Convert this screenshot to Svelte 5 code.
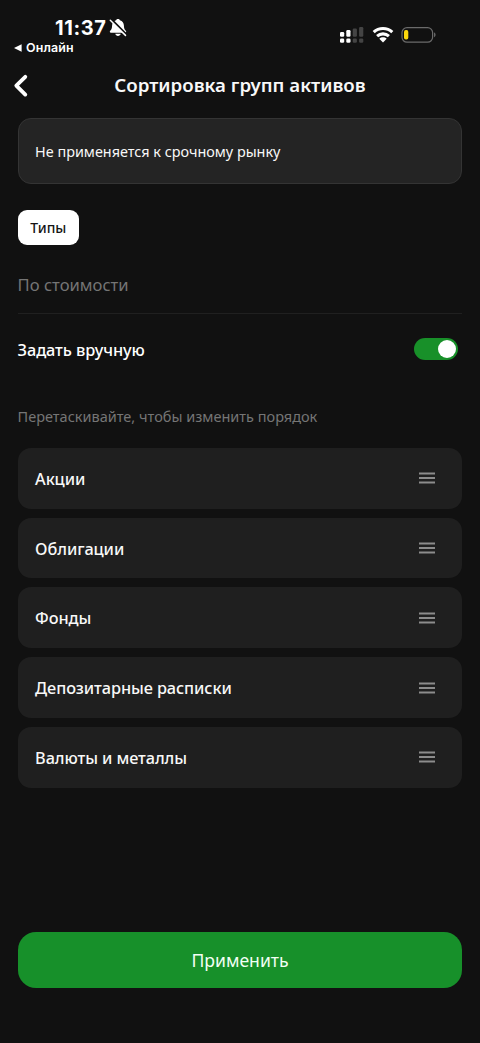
<script>
  const groups = ['Акции', 'Облигации', 'Фонды', 'Депозитарные расписки', 'Валюты и металлы'];
  let manual = $state(true);
</script>

<div class="screen">
  <div class="status">
    <div class="left">
      <div class="clock">
        <span class="time">11:37</span>
        <svg width="18" height="19" viewBox="0 0 18 19">
          <path d="M9 1c-1 0-1.600.5-1.900 1.300C4.500 3 3.200 4.900 3.100 7.500 3 10.300 2.700 11.200 1.200 12.800c-.8.9-.4 2 .7 2h14.200c1.100 0 1.500-1.100.7-2-1.500-1.600-1.800-2.500-1.900-5.300-.1-2.600-1.400-4.500-4-5.200C10.600 1.500 10 1 9 1zM6.300 15.700c.3 1.400 1.300 2.200 2.700 2.200s2.400-.8 2.700-2.200z" fill="#fff" />
          <path d="M2.600 1.800 17 16.400" stroke="#111" stroke-width="2.600" />
          <path d="M1.300 2.200 16.500 17.400" stroke="#fff" stroke-width="1.500" stroke-linecap="round" />
        </svg>
      </div>
      <div class="return">
        <svg width="8" height="8" viewBox="0 0 8 8"><path d="M7.600.2v7.600L0 4z" fill="#fff" /></svg>
        <span>Онлайн</span>
      </div>
    </div>
    <div class="right">
      <svg width="26" height="18" viewBox="0 0 26 18">
        <g fill="#fff">
          <rect x="1" y="6" width="4.200" height="4.800" rx="1.200" />
          <rect x="7.300" y="4" width="4.200" height="6.800" rx="1.200" />
          <rect x="1" y="12.500" width="4.200" height="4.300" rx="1.300" />
          <rect x="7.300" y="12.500" width="4.200" height="4.300" rx="1.300" />
        </g>
        <g fill="#444">
          <rect x="13.700" y="2.500" width="4.200" height="8.300" rx="1.200" />
          <rect x="20.100" y="1" width="4.200" height="9.800" rx="1.200" />
          <rect x="13.700" y="12.500" width="4.200" height="4.300" rx="1.300" />
          <rect x="20.100" y="12.500" width="4.200" height="4.300" rx="1.300" />
        </g>
      </svg>
      <svg class="wifi" width="22" height="17" viewBox="0 0 22 17" fill="none" stroke="#fff" stroke-width="3.100">
        <path d="M1.700 6.100C6.900 1.300 15.100 1.300 20.300 6.100" />
        <path d="M5.100 10.200c3.400-3.100 8.400-3.100 11.800 0" />
        <path d="M7.300 12.700c2.100-1.900 5.300-1.900 7.400 0L11 16.600z" fill="#fff" stroke="none" />
      </svg>
      <svg width="36" height="18" viewBox="0 0 36 18">
        <rect x="1" y="1.600" width="30.600" height="14.600" rx="5" fill="none" stroke="#6b6b6b" stroke-width="1.200" />
        <rect x="3" y="4.100" width="4.300" height="9.400" rx="1.800" fill="#fcd80c" />
        <path d="M33.200 6.600c1.700.5 1.700 4.200 0 4.700z" fill="#777" />
      </svg>
    </div>
  </div>

  <header>
    <button class="back" aria-label="Назад">
      <svg width="16" height="24" viewBox="0 0 16 24"><path d="M12.300 2.800 3.300 11.700l9 8.900" fill="none" stroke="#fff" stroke-width="3.800" stroke-linecap="round" stroke-linejoin="round" /></svg>
    </button>
    <h1>Сортировка групп активов</h1>
  </header>

  <div class="notice"><span>Не применяется к срочному рынку</span></div>
  <button class="chip"><span>Типы</span></button>

  <div class="row value"><span>По стоимости</span></div>
  <div class="row manual">
    <span>Задать вручную</span>
    <button class="switch" class:on={manual} role="switch" aria-checked={manual} aria-label="Задать вручную" onclick={() => (manual = !manual)}><i></i></button>
  </div>
  <p class="hint">Перетаскивайте, чтобы изменить порядок</p>

  <ul>
    {#each groups as name}
      <li>
        <span>{name}</span>
        <svg width="18" height="14" viewBox="0 0 18 14"><path d="M1 2.500h16M1 7h16M1 11.500h16" stroke="#8c8c8c" stroke-width="2" /></svg>
      </li>
    {/each}
  </ul>

  <button class="apply">Применить</button>
</div>

<style>
  :global(body) { background: #111; }
  .screen {
    box-sizing: border-box; width: 480px; height: 1043px; padding: 0 17.600px;
    display: flex; flex-direction: column; overflow: hidden;
    background: #111; color: #f8f8f8; font-family: "Noto Sans", sans-serif; font-weight: 400;
  }
  button { border: 0; padding: 0; font: inherit; color: inherit; background: none; }
  .status { height: 60px; flex: none; display: flex; justify-content: space-between; margin: 0 -17.600px; }
  .left { padding: 17px 0 0 13.500px; }
  .clock { display: flex; align-items: center; padding-left: 41.500px; height: 21px; gap: 3px; }
  .time { font: 700 20px/21px Inter, sans-serif; color: #fff; letter-spacing: 0.600px; padding-top: 1px; }
  .return { display: flex; align-items: center; gap: 4.500px; height: 20px; font: 600 12.400px/20px Inter, sans-serif; color: #fff; letter-spacing: 0.150px; }
  .right { display: flex; align-items: flex-start; padding: 26px 43px 0 0; }
  .right .wifi { margin: 0 7.500px 0 6.500px; }
  header { height: 58px; flex: none; display: grid; grid-template-columns: 24px 1fr 24px; }
  .back { height: 24px; margin: 14px 0 0 -5px; text-align: left; }
  .back svg { display: block; }
  h1 { margin: 11px 0 0; font-size: 18.700px; line-height: 28px; font-weight: 600; text-align: center; white-space: nowrap; }
  .notice {
    box-sizing: border-box; height: 65.500px; flex: none; display: flex; align-items: center; padding: 2px 0 0 16.500px;
    border: 1px solid #343434; border-radius: 13px; background: #242424; font-size: 14.400px;
  }
  .chip { height: 35px; width: 61.500px; flex: none; margin-top: 26.500px; border-radius: 9px; background: #fff; color: #151515; font-size: 14px; font-weight: 500; }
  .row { display: flex; align-items: center; flex: none; font-size: 16.300px; }
  .value { height: 69px; box-sizing: border-box; padding-top: 28px; border-bottom: 1.500px solid #202020; color: #757575; align-items: flex-start; font-size: 16.600px; line-height: 24px; }
  .manual { height: 70px; justify-content: space-between; padding-right: 4.500px; color: #fff; font-weight: 500; letter-spacing: -0.080px; }
  .manual span { padding-top: 1px; }
  .switch { box-sizing: border-box; width: 44px; height: 22px; border-radius: 11px; background: #444; display: flex; align-items: center; padding: 0 2px; }
  .switch.on { background: #189029; justify-content: flex-end; }
  .switch i { width: 18px; height: 18px; border-radius: 50%; background: #fff; }
  .hint { margin: 20.500px 0 0; height: 43.300px; line-height: 23px; flex: none; font-size: 14.500px; color: #757575; white-space: nowrap; }
  ul { list-style: none; margin: 0; padding: 0; display: grid; gap: 8.900px; flex: none; }
  li { box-sizing: border-box; height: 60.900px; display: flex; align-items: center; justify-content: space-between; padding: 0 26.500px 0 17.500px; border-radius: 13px; background: #1f1f1f; font-size: 16.300px; font-weight: 500; letter-spacing: -0.090px; }
  li span { padding-top: 1px; }
  .apply { margin-top: auto; margin-bottom: 55px; height: 56px; flex: none; border-radius: 18px; background: #17902a; font-size: 17.600px; color: #f2fff4; padding-bottom: 1px; }
</style>
